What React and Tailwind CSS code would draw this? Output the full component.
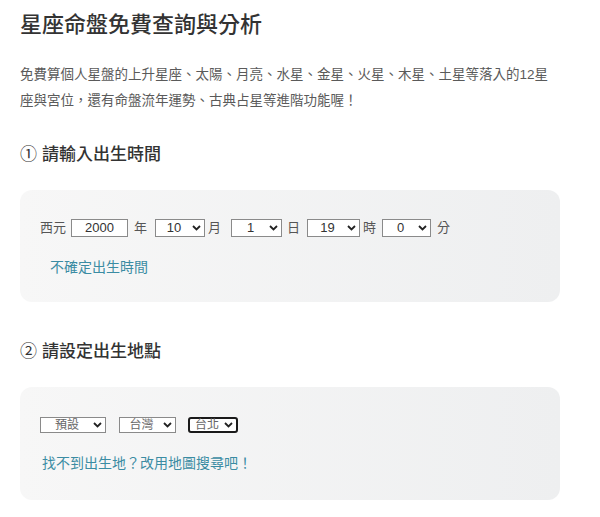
const FONT = '"Liberation Sans", "Noto Sans CJK TC", sans-serif';

export default function App() {
  return (
    <div className="min-h-screen bg-white" style={{ fontFamily: FONT }}>
      <main className="w-[540px] ml-5 pt-[10px]">
        <h1 className="text-[22px] leading-[30px] font-medium text-[#333]">星座命盤免費查詢與分析</h1>

        <p className="mt-[22px] text-[13.5px] leading-[26px] text-[#5a5a5a]">
          免費算個人星盤的上升星座、太陽、月亮、水星、金星、火星、木星、土星等落入的12星座與宮位，還有命盤流年運勢、古典占星等進階功能喔！
        </p>

        <Heading mark="①" title="請輸入出生時間" className="mt-[29px]" />

        <Card className="mt-[23px] h-[112px] pt-[29px]">
          <div className="flex items-center h-[18px] text-[13px] text-[#555]">
            <span>西元</span>
            <span className="ml-[5px] inline-flex items-center justify-center w-[57px] h-[18px] border border-[#8a8a8a] bg-white text-[13px] text-[#333]">2000</span>
            <span className="ml-[6px]">年</span>
            <FakeSelect value="10" w="w-[50px]" className="ml-[8px]" />
            <span className="ml-[3px]">月</span>
            <FakeSelect value="1" w="w-[51px]" className="ml-[10px]" />
            <span className="ml-[5px]">日</span>
            <FakeSelect value="19" w="w-[53px]" className="ml-[7px]" />
            <span className="ml-[3px]">時</span>
            <FakeSelect value="0" w="w-[49px]" className="ml-[6px]" />
            <span className="ml-[6px]">分</span>
          </div>
          <a className="block mt-[20px] ml-[10px] text-[14px] leading-[20px] text-[#3b8ca3]">不確定出生時間</a>
        </Card>

        <Heading mark="②" title="請設定出生地點" className="mt-[38px]" />

        <Card className="mt-[23px] h-[113px] pt-[30px]">
          <div className="flex items-center h-[16px]">
            <FakeSelect value="預設" w="w-[66px]" h="h-[16px]" small />
            <FakeSelect value="台灣" w="w-[57px]" h="h-[16px]" small className="ml-[13px]" />
            <FakeSelect value="台北" w="w-[50px]" h="h-[16px]" small focused className="ml-[12px]" />
          </div>
          <a className="block mt-[20px] ml-[2px] text-[14px] leading-[20px] text-[#3b8ca3]">找不到出生地？改用地圖搜尋吧！</a>
        </Card>
      </main>
    </div>
  );
}

function Heading({ mark, title, className }) {
  return (
    <h2 className={`flex items-center gap-[5px] text-[17px] leading-[24px] font-medium text-[#333] ${className}`}>
      <span className="font-normal">{mark}</span>
      <span>{title}</span>
    </h2>
  );
}

function Card({ className, children }) {
  return (
    <section className={`rounded-[12px] bg-gradient-to-r from-[#f7f7f7] to-[#eeeff0] px-5 ${className}`}>
      {children}
    </section>
  );
}

function FakeSelect({ value, w, h = 'h-[18px]', small, focused, className = '' }) {
  const border = focused
    ? 'border-2 border-[#1a1a1a] rounded-[3px]'
    : 'border border-[#8a8a8a]';
  return (
    <span className={`inline-flex items-center bg-white ${w} ${h} ${border} ${className}`}>
      <span className={`flex-1 text-center ${small ? 'text-[12px] text-[#666]' : 'text-[13px] text-[#333]'}`}>{value}</span>
      <svg width="9" height="6" viewBox="0 0 9 6" className="mr-[3px] shrink-0">
        <polyline points="1,1 4.5,4.5 8,1" fill="none" stroke="#222" strokeWidth="1.8" />
      </svg>
    </span>
  );
}
